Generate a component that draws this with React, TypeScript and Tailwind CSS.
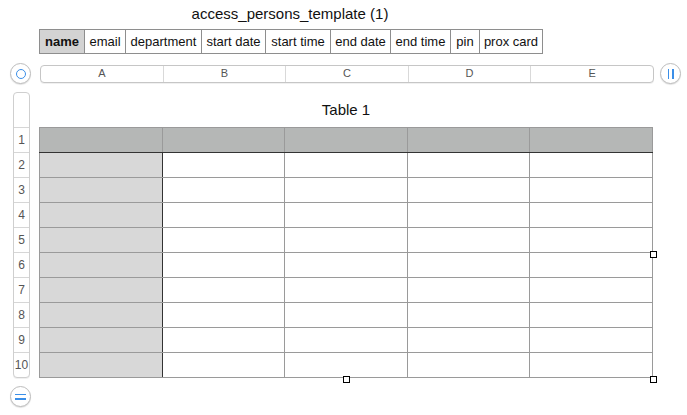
import React from 'react';

const tabs = [
  { label: 'name', w: 'w-[44px]' },
  { label: 'email', w: 'w-[41px]' },
  { label: 'department', w: 'w-[76px]' },
  { label: 'start date', w: 'w-[64px]' },
  { label: 'start time', w: 'w-[65px]' },
  { label: 'end date', w: 'w-[60px]' },
  { label: 'end time', w: 'w-[60px]' },
  { label: 'pin', w: 'w-[29px]' },
  { label: 'prox card', w: 'w-[63px]' },
];

const cols = ['A', 'B', 'C', 'D', 'E'];
const rows = [2, 3, 4, 5, 6, 7, 8, 9, 10];

function CircleButton({ children }: { children: React.ReactNode }) {
  return (
    <div className="w-[21px] h-[21px] rounded-full border border-[#bdbdbd] bg-white shadow-[0_1px_1px_rgba(0,0,0,0.12)] flex items-center justify-center shrink-0">
      {children}
    </div>
  );
}

function Handle({ className }: { className: string }) {
  return <div className={`absolute w-[7px] h-[7px] border border-black bg-white ${className}`} />;
}

export default function App() {
  return (
    <div className="w-[687px] h-[415px] bg-white relative overflow-hidden font-['Liberation_Sans',Arial,sans-serif] text-[#111]">
      {/* title + sheet tabs */}
      <div className="pl-[39px] pt-[4px] flex flex-col items-start">
        <div className="w-[502px] text-center text-[15px] leading-[19px]">access_persons_template (1)</div>
        <div className="mt-[6px] flex h-[25px] border border-[#8e8e8e]">
          {tabs.map((t, i) => (
            <div
              key={t.label}
              className={`${t.w} flex items-center justify-center text-[13px] ${i > 0 ? 'border-l border-[#8e8e8e]' : ''} ${
                i === 0 ? 'bg-[#d3d3d3] font-bold' : 'bg-white'
              }`}
            >
              {t.label}
            </div>
          ))}
        </div>
      </div>

      {/* column header bar */}
      <div className="mt-[9px] flex items-center h-[21px]">
        <div className="ml-[10px]">
          <CircleButton>
            <div className="w-[10px] h-[10px] rounded-full border-[1.5px] border-[#3b8fe8]" />
          </CircleButton>
        </div>
        <div className="ml-[9px] w-[614px] h-[18px] flex border border-[#c6c6c6] rounded-[4px] bg-white shadow-[0_1px_0_rgba(0,0,0,0.06)]">
          {cols.map((c, i) => (
            <div
              key={c}
              className={`flex-1 flex items-center justify-center text-[11px] text-[#555] ${i > 0 ? 'border-l border-[#d9d9d9]' : ''}`}
            >
              {c}
            </div>
          ))}
        </div>
        <div className="ml-[6px]">
          <CircleButton>
            <div className="flex gap-[3px]">
              <div className="w-[1.5px] h-[10px] bg-[#3b8fe8]" />
              <div className="w-[1.5px] h-[10px] bg-[#3b8fe8]" />
            </div>
          </CircleButton>
        </div>
      </div>

      {/* body */}
      <div className="mt-[8px] flex items-start">
        <div className="ml-[13px] w-[17px] border border-[#cfcfcf] rounded-[4px] bg-white shadow-[0_1px_0_rgba(0,0,0,0.06)] flex flex-col">
          <div className="h-[34px]" />
          {[1, ...rows].map((n) => (
            <div key={n} className="h-[25px] border-t border-[#d6d6d6] flex items-center justify-center text-[12px] text-[#555]">
              {n}
            </div>
          ))}
        </div>

        <div className="ml-[9px] flex flex-col">
          <div className="h-[35px] flex items-center justify-center text-[15px] pt-[1px]">Table 1</div>
          <table className="border-collapse w-[614px] table-fixed">
            <tbody>
              <tr>
                {cols.map((c) => (
                  <td key={c} className="h-[25px] p-0 bg-[#b5b7b6] border border-[#9a9a9a] border-b-[#333]" />
                ))}
              </tr>
              {rows.map((r) => (
                <tr key={r}>
                  {cols.map((c, i) => (
                    <td
                      key={c}
                      className={`h-[25px] p-0 border border-[#9a9a9a] ${i === 0 ? 'bg-[#d8d8d8] border-r-[#333]' : 'bg-white'}`}
                    />
                  ))}
                </tr>
              ))}
            </tbody>
          </table>
        </div>
      </div>

      <div className="absolute left-[10px] top-[386px]">
        <CircleButton>
          <div className="flex flex-col gap-[3px]">
            <div className="w-[11px] h-[1.5px] bg-[#3b8fe8]" />
            <div className="w-[11px] h-[1.5px] bg-[#3b8fe8]" />
          </div>
        </CircleButton>
      </div>

      <Handle className="left-[650px] top-[251px]" />
      <Handle className="left-[343px] top-[376px]" />
      <Handle className="left-[650px] top-[376px]" />
    </div>
  );
}
